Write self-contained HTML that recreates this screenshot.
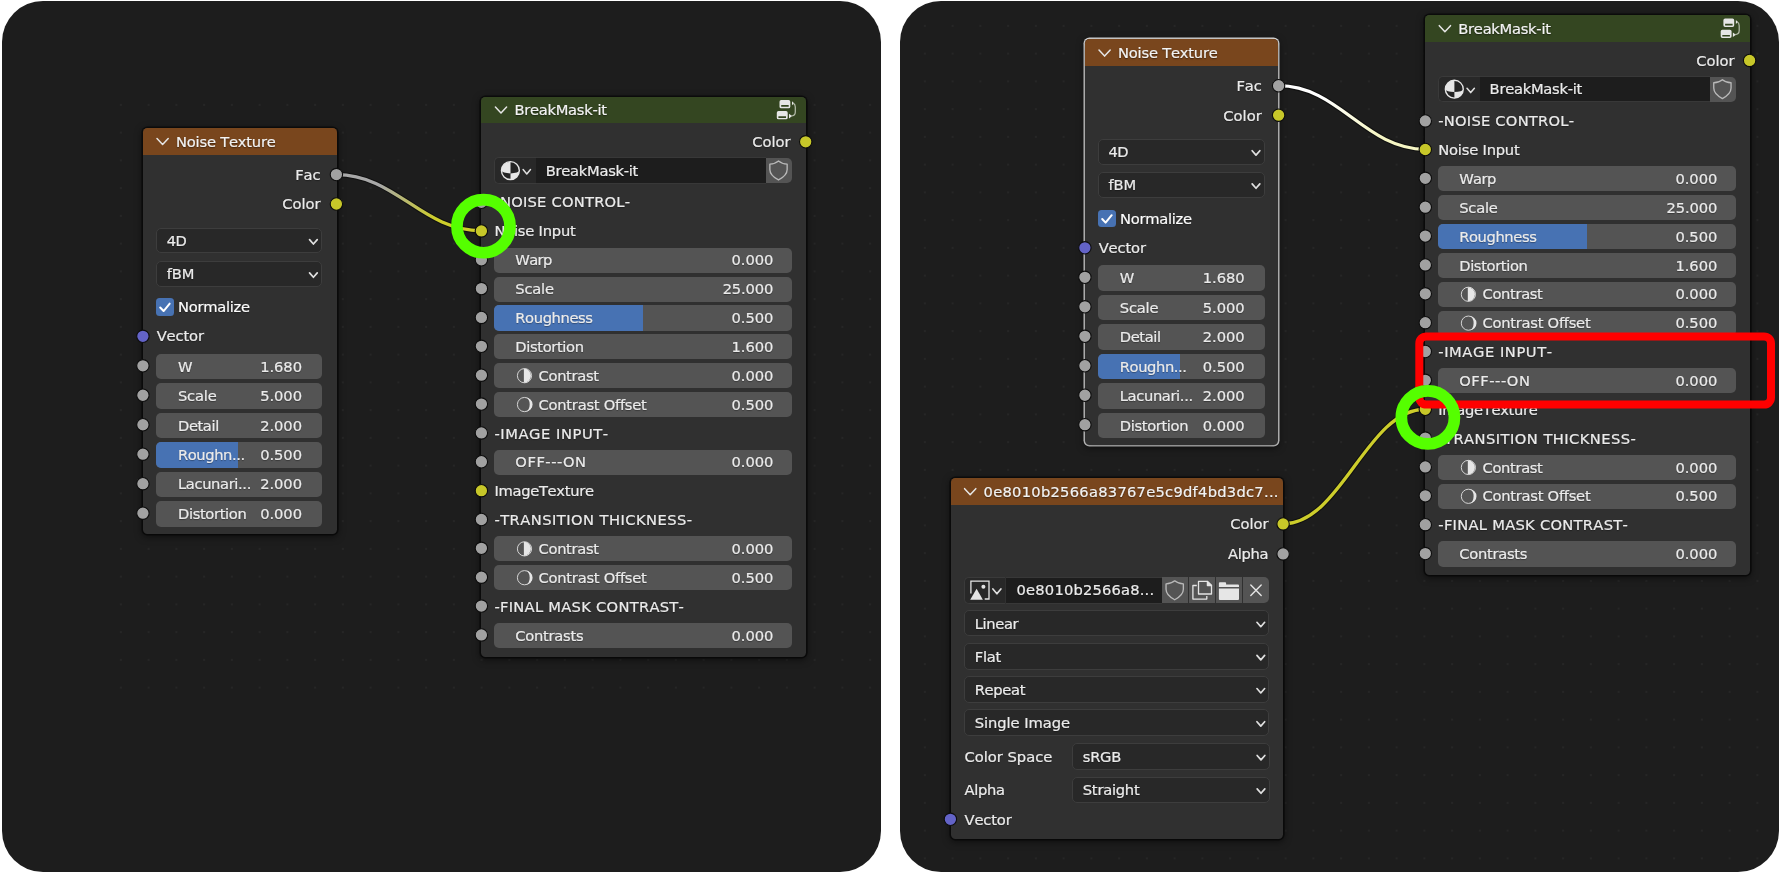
<!DOCTYPE html>
<html lang="en"><head><meta charset="utf-8"><title>BreakMask-it node setup</title>
<style>
html,body{margin:0;padding:0;background:#fff;}
body{width:1787px;height:874px;position:relative;overflow:hidden;font-family:"DejaVu Sans", "Liberation Sans", sans-serif;font-size:14.7px;color:#ebebeb;font-kerning:none;-webkit-text-stroke:0.22px #ebebeb;}
div{position:absolute;box-sizing:border-box;}
svg{position:absolute;left:0;top:0;}
#stage{left:0;top:0;width:1787px;height:874px;transform:translateZ(0);will-change:transform;}
.panel{background:#1d1d1d;border-radius:41px;overflow:hidden;}
.dots{background-image:radial-gradient(circle,#272727 0.6px,rgba(39,39,39,0) 1.4px);background-size:27.75px 27.75px;}
.node{background:#303030;border-radius:4.5px;box-shadow:0 2px 7px 1px rgba(0,0,0,.5),0 0 0 1.6px rgba(12,12,12,.85);}
.node.sel{box-shadow:0 2px 7px 1px rgba(0,0,0,.5),0 0 0 1.5px #ececec;}
.hd{border-radius:4.5px 4.5px 0 0;}
.t{white-space:nowrap;line-height:20px;height:20px;text-shadow:0 1px 1px rgba(0,0,0,.35);}
.ts{text-shadow:0 1px 1.5px rgba(0,0,0,.55);color:#f4f4f4;}
.fld{background:#545454;border-radius:5px;overflow:hidden;}
.fill{left:0;top:0;height:100%;background:#4772b3;}
.dd{background:#282828;border:1px solid #3d3d3d;border-radius:5px;}
.cb{background:#4772b3;border-radius:3.5px;}
.selico{background:#282828;border:1px solid #3a3a3a;border-right:none;border-radius:5px 0 0 5px;}
.name{background:#1d1d1d;border-top:1px solid #383838;border-bottom:1px solid #383838;}
.btn{background:#545454;}
</style></head><body>
<div id="stage">
<div class="panel" style="left:2px;top:1px;width:879px;height:870.5px"><div class="dots" style="left:105px;top:90px;width:780px;height:610px"></div></div>
<div class="panel" style="left:900px;top:1px;width:879px;height:870.5px"><div class="dots" style="left:11.4px;top:10.9px;width:880px;height:870px"></div></div>
<div class="node" style="left:143px;top:127.85px;width:193.8px;height:405.7px;"></div>
<div class="node" style="left:481.4px;top:96.5px;width:324.8px;height:560px;"></div>
<div class="node sel" style="left:1085px;top:39.4px;width:193px;height:405.7px;"></div>
<div class="node" style="left:1425.3px;top:15.1px;width:324.8px;height:560px;"></div>
<div class="node" style="left:950.6px;top:478.1px;width:332.5px;height:361px;"></div>
<svg width="1787" height="874" viewBox="0 0 1787 874"><defs></defs><linearGradient id="g1" gradientUnits="userSpaceOnUse" x1="336.4" y1="0" x2="481.4" y2="0"><stop offset="0.3" stop-color="#a8a8a8"/><stop offset="0.68" stop-color="#cdcd2b"/></linearGradient><path d="M336.4 174.6C395.85 174.6 421.95 230.8 481.4 230.8" fill="none" stroke="#101010" stroke-width="5.4" stroke-linecap="round"/><path d="M336.4 174.6C395.85 174.6 421.95 230.8 481.4 230.8" fill="none" stroke="url(#g1)" stroke-width="3.3" stroke-linecap="round"/><linearGradient id="g2" gradientUnits="userSpaceOnUse" x1="1278.6" y1="0" x2="1425.3" y2="0"><stop offset="0.3" stop-color="#ffffff"/><stop offset="0.68" stop-color="#f6f6c4"/></linearGradient><path d="M1278.6 85.7C1338.75 85.7 1365.15 149.3 1425.3 149.3" fill="none" stroke="#101010" stroke-width="5.4" stroke-linecap="round"/><path d="M1278.6 85.7C1338.75 85.7 1365.15 149.3 1425.3 149.3" fill="none" stroke="url(#g2)" stroke-width="3.3" stroke-linecap="round"/><linearGradient id="g3" gradientUnits="userSpaceOnUse" x1="1283.1" y1="0" x2="1425.3" y2="0"><stop offset="0.3" stop-color="#cdcd2b"/><stop offset="0.68" stop-color="#cdcd2b"/></linearGradient><path d="M1283.1 523.9C1341.4 523.9 1367 409.23 1425.3 409.23" fill="none" stroke="#101010" stroke-width="5.4" stroke-linecap="round"/><path d="M1283.1 523.9C1341.4 523.9 1367 409.23 1425.3 409.23" fill="none" stroke="url(#g3)" stroke-width="3.3" stroke-linecap="round"/></svg>
<div class="hd" style="left:143px;top:127.85px;width:193.8px;height:27px;background:#79461d;"></div>
<div class="t ts" style="top:131.65px;left:176px;letter-spacing:-0.2px;">Noise Texture</div>
<div class="t" style="top:164.75px;right:1466.5px;letter-spacing:-0.18px;margin-right:0.18px;">Fac</div>
<div class="t" style="top:194.15px;right:1466.5px;">Color</div>
<div class="dd" style="left:156px;top:227.85px;width:166px;height:25.6px;"></div>
<div class="t" style="top:230.65px;left:166.7px;letter-spacing:-0.48px;">4D</div>
<div class="dd" style="left:156px;top:261.05px;width:166px;height:25.6px;"></div>
<div class="t" style="top:263.85px;left:166.7px;letter-spacing:-0.07px;">fBM</div>
<div class="cb" style="left:156.2px;top:298.25px;width:17.8px;height:17.6px;"></div>
<div class="t" style="top:297.25px;left:178px;letter-spacing:-0.27px;color:#fff;">Normalize</div>
<div class="t" style="top:326.45px;left:156.7px;letter-spacing:-0.14px;">Vector</div>
<div class="fld" style="left:156px;top:353.7px;width:166px;height:25.6px;"></div>
<div class="t" style="top:356.6px;left:178px;letter-spacing:-0.6px;">W</div>
<div class="t" style="top:356.6px;right:1485px;letter-spacing:-0.05px;margin-right:0.05px;">1.680</div>
<div class="fld" style="left:156px;top:383.17px;width:166px;height:25.6px;"></div>
<div class="t" style="top:386.07px;left:178px;letter-spacing:-0.21px;">Scale</div>
<div class="t" style="top:386.07px;right:1485px;letter-spacing:-0.05px;margin-right:0.05px;">5.000</div>
<div class="fld" style="left:156px;top:412.64px;width:166px;height:25.6px;"></div>
<div class="t" style="top:415.54px;left:178px;letter-spacing:-0.41px;">Detail</div>
<div class="t" style="top:415.54px;right:1485px;letter-spacing:-0.05px;margin-right:0.05px;">2.000</div>
<div class="fld" style="left:156px;top:442.11px;width:166px;height:25.6px;"><div class="fill" style="width:82.17px"></div></div>
<div class="t" style="top:445.01px;left:178px;letter-spacing:-0.41px;">Roughn...</div>
<div class="t" style="top:445.01px;right:1485px;letter-spacing:-0.05px;margin-right:0.05px;">0.500</div>
<div class="fld" style="left:156px;top:471.58px;width:166px;height:25.6px;"></div>
<div class="t" style="top:474.48px;left:178px;letter-spacing:-0.37px;">Lacunari...</div>
<div class="t" style="top:474.48px;right:1485px;letter-spacing:-0.05px;margin-right:0.05px;">2.000</div>
<div class="fld" style="left:156px;top:501.05px;width:166px;height:25.6px;"></div>
<div class="t" style="top:503.95px;left:178px;letter-spacing:-0.36px;">Distortion</div>
<div class="t" style="top:503.95px;right:1485px;letter-spacing:-0.05px;margin-right:0.05px;">0.000</div>
<div class="hd" style="left:481.4px;top:96.5px;width:324.8px;height:26.7px;background:#344621;"></div>
<div class="t ts" style="top:100.15px;left:514.4px;letter-spacing:-0.27px;">BreakMask-it</div>
<div class="t" style="top:132px;right:996.4px;">Color</div>
<div class="selico" style="left:494.4px;top:157.3px;width:41.6px;height:26.4px;"></div>
<div class="name" style="left:536px;top:157.3px;width:229.8px;height:26.4px;"></div>
<div class="btn" style="left:765.8px;top:158px;width:26.3px;height:25px;border-radius:0 5px 5px 0;"></div>
<div class="t" style="top:160.6px;left:545.7px;letter-spacing:-0.27px;">BreakMask-it</div>
<div class="t" style="top:192.33px;left:494.4px;letter-spacing:0.23px;">-NOISE CONTROL-</div>
<div class="t" style="top:220.59px;left:494.4px;letter-spacing:-0.2px;">Noise Input</div>
<div class="fld" style="left:494.4px;top:247.65px;width:297.6px;height:25.2px;"></div>
<div class="t" style="top:250.35px;left:515.3px;letter-spacing:-0.6px;">Warp</div>
<div class="t" style="top:250.35px;right:1013.6px;letter-spacing:-0.05px;margin-right:0.05px;">0.000</div>
<div class="fld" style="left:494.4px;top:276.51px;width:297.6px;height:25.2px;"></div>
<div class="t" style="top:279.21px;left:515.3px;letter-spacing:-0.21px;">Scale</div>
<div class="t" style="top:279.21px;right:1013.6px;letter-spacing:-0.13px;margin-right:0.13px;">25.000</div>
<div class="fld" style="left:494.4px;top:305.37px;width:297.6px;height:25.2px;"><div class="fill" style="width:148.3px"></div></div>
<div class="t" style="top:308.07px;left:515.3px;letter-spacing:-0.39px;">Roughness</div>
<div class="t" style="top:308.07px;right:1013.6px;letter-spacing:-0.05px;margin-right:0.05px;">0.500</div>
<div class="fld" style="left:494.4px;top:334.23px;width:297.6px;height:25.2px;"></div>
<div class="t" style="top:336.93px;left:515.3px;letter-spacing:-0.36px;">Distortion</div>
<div class="t" style="top:336.93px;right:1013.6px;letter-spacing:-0.05px;margin-right:0.05px;">1.600</div>
<div class="fld" style="left:494.4px;top:363.09px;width:297.6px;height:25.2px;"></div>
<div class="t" style="top:365.79px;left:538.6px;letter-spacing:-0.34px;">Contrast</div>
<div class="t" style="top:365.79px;right:1013.6px;letter-spacing:-0.05px;margin-right:0.05px;">0.000</div>
<div class="fld" style="left:494.4px;top:391.95px;width:297.6px;height:25.2px;"></div>
<div class="t" style="top:394.65px;left:538.6px;letter-spacing:-0.26px;">Contrast Offset</div>
<div class="t" style="top:394.65px;right:1013.6px;letter-spacing:-0.05px;margin-right:0.05px;">0.500</div>
<div class="t" style="top:423.61px;left:494.4px;letter-spacing:0.57px;">-IMAGE INPUT-</div>
<div class="fld" style="left:494.4px;top:449.67px;width:297.6px;height:25.2px;"></div>
<div class="t" style="top:452.37px;left:515.3px;letter-spacing:0.54px;">OFF---ON</div>
<div class="t" style="top:452.37px;right:1013.6px;letter-spacing:-0.05px;margin-right:0.05px;">0.000</div>
<div class="t" style="top:481.33px;left:494.4px;letter-spacing:-0.3px;">ImageTexture</div>
<div class="t" style="top:510.19px;left:494.4px;letter-spacing:0.45px;">-TRANSITION THICKNESS-</div>
<div class="fld" style="left:494.4px;top:536.25px;width:297.6px;height:25.2px;"></div>
<div class="t" style="top:538.95px;left:538.6px;letter-spacing:-0.34px;">Contrast</div>
<div class="t" style="top:538.95px;right:1013.6px;letter-spacing:-0.05px;margin-right:0.05px;">0.000</div>
<div class="fld" style="left:494.4px;top:565.11px;width:297.6px;height:25.2px;"></div>
<div class="t" style="top:567.81px;left:538.6px;letter-spacing:-0.26px;">Contrast Offset</div>
<div class="t" style="top:567.81px;right:1013.6px;letter-spacing:-0.05px;margin-right:0.05px;">0.500</div>
<div class="t" style="top:596.77px;left:494.4px;letter-spacing:0.28px;">-FINAL MASK CONTRAST-</div>
<div class="fld" style="left:494.4px;top:622.83px;width:297.6px;height:25.2px;"></div>
<div class="t" style="top:625.53px;left:515.3px;letter-spacing:-0.27px;">Contrasts</div>
<div class="t" style="top:625.53px;right:1013.6px;letter-spacing:-0.05px;margin-right:0.05px;">0.000</div>
<div class="hd" style="left:1085px;top:39.4px;width:193px;height:27px;background:#79461d;"></div>
<div class="t ts" style="top:43.2px;left:1118px;letter-spacing:-0.2px;">Noise Texture</div>
<div class="t" style="top:76.3px;right:525.3px;letter-spacing:-0.18px;margin-right:0.18px;">Fac</div>
<div class="t" style="top:105.7px;right:525.3px;">Color</div>
<div class="dd" style="left:1097.8px;top:138.5px;width:166.8px;height:26.4px;"></div>
<div class="t" style="top:141.7px;left:1108.5px;letter-spacing:-0.48px;">4D</div>
<div class="dd" style="left:1097.8px;top:171.7px;width:166.8px;height:26.4px;"></div>
<div class="t" style="top:174.9px;left:1108.5px;letter-spacing:-0.07px;">fBM</div>
<div class="cb" style="left:1098.2px;top:209.8px;width:17.8px;height:17.6px;"></div>
<div class="t" style="top:208.8px;left:1120px;letter-spacing:-0.27px;color:#fff;">Normalize</div>
<div class="t" style="top:238px;left:1098.7px;letter-spacing:-0.14px;">Vector</div>
<div class="fld" style="left:1097.8px;top:265.25px;width:166.8px;height:25.6px;"></div>
<div class="t" style="top:268.15px;left:1119.8px;letter-spacing:-0.6px;">W</div>
<div class="t" style="top:268.15px;right:542.4px;letter-spacing:-0.05px;margin-right:0.05px;">1.680</div>
<div class="fld" style="left:1097.8px;top:294.72px;width:166.8px;height:25.6px;"></div>
<div class="t" style="top:297.62px;left:1119.8px;letter-spacing:-0.21px;">Scale</div>
<div class="t" style="top:297.62px;right:542.4px;letter-spacing:-0.05px;margin-right:0.05px;">5.000</div>
<div class="fld" style="left:1097.8px;top:324.19px;width:166.8px;height:25.6px;"></div>
<div class="t" style="top:327.09px;left:1119.8px;letter-spacing:-0.41px;">Detail</div>
<div class="t" style="top:327.09px;right:542.4px;letter-spacing:-0.05px;margin-right:0.05px;">2.000</div>
<div class="fld" style="left:1097.8px;top:353.66px;width:166.8px;height:25.6px;"><div class="fill" style="width:82.57px"></div></div>
<div class="t" style="top:356.56px;left:1119.8px;letter-spacing:-0.41px;">Roughn...</div>
<div class="t" style="top:356.56px;right:542.4px;letter-spacing:-0.05px;margin-right:0.05px;">0.500</div>
<div class="fld" style="left:1097.8px;top:383.13px;width:166.8px;height:25.6px;"></div>
<div class="t" style="top:386.03px;left:1119.8px;letter-spacing:-0.37px;">Lacunari...</div>
<div class="t" style="top:386.03px;right:542.4px;letter-spacing:-0.05px;margin-right:0.05px;">2.000</div>
<div class="fld" style="left:1097.8px;top:412.6px;width:166.8px;height:25.6px;"></div>
<div class="t" style="top:415.5px;left:1119.8px;letter-spacing:-0.36px;">Distortion</div>
<div class="t" style="top:415.5px;right:542.4px;letter-spacing:-0.05px;margin-right:0.05px;">0.000</div>
<div class="hd" style="left:1425.3px;top:15.1px;width:324.8px;height:26.7px;background:#344621;"></div>
<div class="t ts" style="top:18.75px;left:1458.3px;letter-spacing:-0.27px;">BreakMask-it</div>
<div class="t" style="top:50.6px;right:52.5px;">Color</div>
<div class="selico" style="left:1438.3px;top:75.9px;width:41.6px;height:26.4px;"></div>
<div class="name" style="left:1479.9px;top:75.9px;width:229.8px;height:26.4px;"></div>
<div class="btn" style="left:1709.7px;top:76.6px;width:26.3px;height:25px;border-radius:0 5px 5px 0;"></div>
<div class="t" style="top:79.2px;left:1489.6px;letter-spacing:-0.27px;">BreakMask-it</div>
<div class="t" style="top:110.93px;left:1438.3px;letter-spacing:0.23px;">-NOISE CONTROL-</div>
<div class="t" style="top:140.19px;left:1438.3px;letter-spacing:-0.2px;">Noise Input</div>
<div class="fld" style="left:1438.3px;top:166.25px;width:297.6px;height:25.2px;"></div>
<div class="t" style="top:168.95px;left:1459.2px;letter-spacing:-0.6px;">Warp</div>
<div class="t" style="top:168.95px;right:69.7px;letter-spacing:-0.05px;margin-right:0.05px;">0.000</div>
<div class="fld" style="left:1438.3px;top:195.11px;width:297.6px;height:25.2px;"></div>
<div class="t" style="top:197.81px;left:1459.2px;letter-spacing:-0.21px;">Scale</div>
<div class="t" style="top:197.81px;right:69.7px;letter-spacing:-0.13px;margin-right:0.13px;">25.000</div>
<div class="fld" style="left:1438.3px;top:223.97px;width:297.6px;height:25.2px;"><div class="fill" style="width:148.3px"></div></div>
<div class="t" style="top:226.67px;left:1459.2px;letter-spacing:-0.39px;">Roughness</div>
<div class="t" style="top:226.67px;right:69.7px;letter-spacing:-0.05px;margin-right:0.05px;">0.500</div>
<div class="fld" style="left:1438.3px;top:252.83px;width:297.6px;height:25.2px;"></div>
<div class="t" style="top:255.53px;left:1459.2px;letter-spacing:-0.36px;">Distortion</div>
<div class="t" style="top:255.53px;right:69.7px;letter-spacing:-0.05px;margin-right:0.05px;">1.600</div>
<div class="fld" style="left:1438.3px;top:281.69px;width:297.6px;height:25.2px;"></div>
<div class="t" style="top:284.39px;left:1482.5px;letter-spacing:-0.34px;">Contrast</div>
<div class="t" style="top:284.39px;right:69.7px;letter-spacing:-0.05px;margin-right:0.05px;">0.000</div>
<div class="fld" style="left:1438.3px;top:310.55px;width:297.6px;height:25.2px;"></div>
<div class="t" style="top:313.25px;left:1482.5px;letter-spacing:-0.26px;">Contrast Offset</div>
<div class="t" style="top:313.25px;right:69.7px;letter-spacing:-0.05px;margin-right:0.05px;">0.500</div>
<div class="t" style="top:342.21px;left:1438.3px;letter-spacing:0.57px;">-IMAGE INPUT-</div>
<div class="fld" style="left:1438.3px;top:368.27px;width:297.6px;height:25.2px;"></div>
<div class="t" style="top:370.97px;left:1459.2px;letter-spacing:0.54px;">OFF---ON</div>
<div class="t" style="top:370.97px;right:69.7px;letter-spacing:-0.05px;margin-right:0.05px;">0.000</div>
<div class="t" style="top:399.93px;left:1438.3px;letter-spacing:-0.3px;">ImageTexture</div>
<div class="t" style="top:428.79px;left:1438.3px;letter-spacing:0.45px;">-TRANSITION THICKNESS-</div>
<div class="fld" style="left:1438.3px;top:454.85px;width:297.6px;height:25.2px;"></div>
<div class="t" style="top:457.55px;left:1482.5px;letter-spacing:-0.34px;">Contrast</div>
<div class="t" style="top:457.55px;right:69.7px;letter-spacing:-0.05px;margin-right:0.05px;">0.000</div>
<div class="fld" style="left:1438.3px;top:483.71px;width:297.6px;height:25.2px;"></div>
<div class="t" style="top:486.41px;left:1482.5px;letter-spacing:-0.26px;">Contrast Offset</div>
<div class="t" style="top:486.41px;right:69.7px;letter-spacing:-0.05px;margin-right:0.05px;">0.500</div>
<div class="t" style="top:515.37px;left:1438.3px;letter-spacing:0.28px;">-FINAL MASK CONTRAST-</div>
<div class="fld" style="left:1438.3px;top:541.43px;width:297.6px;height:25.2px;"></div>
<div class="t" style="top:544.13px;left:1459.2px;letter-spacing:-0.27px;">Contrasts</div>
<div class="t" style="top:544.13px;right:69.7px;letter-spacing:-0.05px;margin-right:0.05px;">0.000</div>
<div class="hd" style="left:950.6px;top:478.1px;width:332.5px;height:26.7px;background:#79461d;"></div>
<div class="t ts" style="top:481.75px;left:983.6px;letter-spacing:0.26px;">0e8010b2566a83767e5c9df4bd3dc7...</div>
<div class="t" style="top:514.1px;right:518.5px;">Color</div>
<div class="t" style="top:544.1px;right:518.5px;letter-spacing:-0.29px;margin-right:0.29px;">Alpha</div>
<div class="selico" style="left:964px;top:576.5px;width:41.4px;height:27px;"></div>
<div class="name" style="left:1005.5px;top:576.5px;width:156.4px;height:27px;"></div>
<div class="btn" style="left:1161.9px;top:577.2px;width:26.2px;height:25.6px;"></div>
<div class="btn" style="left:1189.2px;top:577.2px;width:25.8px;height:25.6px;"></div>
<div class="btn" style="left:1216px;top:577.2px;width:25.9px;height:25.6px;"></div>
<div class="btn" style="left:1243px;top:577.2px;width:26.3px;height:25.6px;border-radius:0 5px 5px 0;"></div>
<div class="t" style="top:580.1px;left:1016.6px;letter-spacing:0.18px;">0e8010b2566a8...</div>
<div class="dd" style="left:964px;top:610.1px;width:305.4px;height:26.4px;"></div>
<div class="t" style="top:613.9px;left:974.7px;letter-spacing:-0.34px;">Linear</div>
<div class="dd" style="left:964px;top:643.23px;width:305.4px;height:26.4px;"></div>
<div class="t" style="top:647.03px;left:974.7px;letter-spacing:-0.22px;">Flat</div>
<div class="dd" style="left:964px;top:676.36px;width:305.4px;height:26.4px;"></div>
<div class="t" style="top:680.16px;left:974.7px;letter-spacing:-0.31px;">Repeat</div>
<div class="dd" style="left:964px;top:709.49px;width:305.4px;height:26.4px;"></div>
<div class="t" style="top:713.29px;left:974.7px;letter-spacing:-0.04px;">Single Image</div>
<div class="t" style="top:746.5px;left:964.5px;">Color Space</div>
<div class="dd" style="left:1072.1px;top:743.4px;width:197.5px;height:26.2px;"></div>
<div class="t" style="top:746.5px;left:1082.8px;letter-spacing:-0.28px;">sRGB</div>
<div class="t" style="top:780px;left:964.5px;letter-spacing:-0.29px;">Alpha</div>
<div class="dd" style="left:1072.1px;top:776.7px;width:197.5px;height:26.3px;"></div>
<div class="t" style="top:779.85px;left:1082.8px;letter-spacing:-0.25px;">Straight</div>
<div class="t" style="top:809.5px;left:964.5px;letter-spacing:-0.14px;">Vector</div>
<svg width="1787" height="874" viewBox="0 0 1787 874"><path d="M157 138.55L162.6 144.55L168.2 138.55" fill="none" stroke="#e6e6e6" stroke-width="1.5" stroke-linecap="round" stroke-linejoin="round"/><circle cx="336.4" cy="174.6" r="6.2" fill="#a1a1a1" stroke="#0d0d0d" stroke-width="1.1"/><circle cx="336.4" cy="204" r="6.2" fill="#c7c729" stroke="#0d0d0d" stroke-width="1.1"/><path d="M309.55 239.65L313.4 244.05L317.25 239.65" fill="none" stroke="#e0e0e0" stroke-width="1.7" stroke-linecap="round" stroke-linejoin="round"/><path d="M309.55 272.85L313.4 277.25L317.25 272.85" fill="none" stroke="#e0e0e0" stroke-width="1.7" stroke-linecap="round" stroke-linejoin="round"/><path d="M160.2 307.45l3.4 3.6l6.1 -7.4" fill="none" stroke="#fff" stroke-width="2" stroke-linecap="round" stroke-linejoin="round"/><circle cx="142.9" cy="336.3" r="6.2" fill="#6363c7" stroke="#0d0d0d" stroke-width="1.1"/><circle cx="142.9" cy="365.8" r="6.2" fill="#a1a1a1" stroke="#0d0d0d" stroke-width="1.1"/><circle cx="142.9" cy="395.27" r="6.2" fill="#a1a1a1" stroke="#0d0d0d" stroke-width="1.1"/><circle cx="142.9" cy="424.74" r="6.2" fill="#a1a1a1" stroke="#0d0d0d" stroke-width="1.1"/><circle cx="142.9" cy="454.21" r="6.2" fill="#a1a1a1" stroke="#0d0d0d" stroke-width="1.1"/><circle cx="142.9" cy="483.68" r="6.2" fill="#a1a1a1" stroke="#0d0d0d" stroke-width="1.1"/><circle cx="142.9" cy="513.15" r="6.2" fill="#a1a1a1" stroke="#0d0d0d" stroke-width="1.1"/><path d="M495.4 107.05L501 113.05L506.6 107.05" fill="none" stroke="#e6e6e6" stroke-width="1.5" stroke-linecap="round" stroke-linejoin="round"/><g transform="translate(481.4 96.5)" fill="#e6e6e6" stroke="none"><path fill-rule="evenodd" d="M299.8 3.45H307.2A1.7 1.7 0 0 1 308.9 5.15V10.15A1.7 1.7 0 0 1 307.2 11.85H299.8A1.7 1.7 0 0 1 298.1 10.15V5.15A1.7 1.7 0 0 1 299.8 3.45ZM299.8 8.6V10.3H307.3V8.6Z"/><path fill-rule="evenodd" d="M297.1 14.55H304.6A1.7 1.7 0 0 1 306.3 16.25V21.15A1.7 1.7 0 0 1 304.6 22.85H297.1A1.7 1.7 0 0 1 295.4 21.15V16.25A1.7 1.7 0 0 1 297.1 14.55ZM297 19.85V21.45H304.6V19.85Z"/><path d="M310.6 4.8V8.8L312.6 6.8Z"/><path d="M307.6 17.3V21.9L310.6 19.6Z"/><path d="M311.8 6.6C313.6 7.4 313.9 8.6 313.9 10.6V15.4C313.9 18.4 312.4 19.4 309.6 19.5" fill="none" stroke="#b4bcaa" stroke-width="1.25"/></g><circle cx="805.7" cy="141.85" r="6.2" fill="#c7c729" stroke="#0d0d0d" stroke-width="1.1"/><g transform="translate(510.4 170.6)"><circle r="8.95" fill="#242424" stroke="#e6e6e6" stroke-width="1.4"/><path d="M0.1 -8.95A8.95 8.95 0 0 0 -8.95 0A8.95 2.8 0 0 0 0.1 2.8Z" fill="#e6e6e6"/><path d="M0.1 2.8A8.95 2.8 0 0 0 8.95 0A8.95 8.95 0 0 1 0.1 8.95Z" fill="#e6e6e6"/></g><path d="M523.1 169.6L526.8 174L530.5 169.6" fill="none" stroke="#e0e0e0" stroke-width="1.5" stroke-linecap="round" stroke-linejoin="round"/><path transform="translate(778.5 161.05)" d="M0 0C2.5 2.2 5.5 3 8.65 3.1L8.65 8.4C8.65 13 4.5 16.5 0 18.9C-4.5 16.5 -8.65 13 -8.65 8.4L-8.65 3.1C-5.5 3 -2.5 2.2 0 0Z" fill="none" stroke="#b9b9b9" stroke-width="1.35" stroke-linejoin="round"/><circle cx="481.4" cy="202.33" r="6.2" fill="#a1a1a1" stroke="#0d0d0d" stroke-width="1.1"/><circle cx="481.4" cy="230.89" r="6.2" fill="#c7c729" stroke="#0d0d0d" stroke-width="1.1"/><circle cx="481.4" cy="259.75" r="6.2" fill="#a1a1a1" stroke="#0d0d0d" stroke-width="1.1"/><circle cx="481.4" cy="288.61" r="6.2" fill="#a1a1a1" stroke="#0d0d0d" stroke-width="1.1"/><circle cx="481.4" cy="317.47" r="6.2" fill="#a1a1a1" stroke="#0d0d0d" stroke-width="1.1"/><circle cx="481.4" cy="346.33" r="6.2" fill="#a1a1a1" stroke="#0d0d0d" stroke-width="1.1"/><circle cx="524.5" cy="375.69" r="7.1" fill="none" stroke="#e2e2e2" stroke-width="0.9"/><path d="M523.9 368.59A7.1 7.1 0 0 1 523.9 382.79Z" fill="#e6e6e6"/><circle cx="481.4" cy="375.19" r="6.2" fill="#a1a1a1" stroke="#0d0d0d" stroke-width="1.1"/><circle cx="524.5" cy="404.55" r="7.1" fill="none" stroke="#e2e2e2" stroke-width="0.9"/><path d="M525.5 397.45A7.1 7.1 0 0 1 525.5 411.65A4.2 7.1 0 0 0 525.5 397.45Z" fill="#e6e6e6"/><circle cx="481.4" cy="404.05" r="6.2" fill="#a1a1a1" stroke="#0d0d0d" stroke-width="1.1"/><circle cx="481.4" cy="432.91" r="6.2" fill="#a1a1a1" stroke="#0d0d0d" stroke-width="1.1"/><circle cx="481.4" cy="461.77" r="6.2" fill="#a1a1a1" stroke="#0d0d0d" stroke-width="1.1"/><circle cx="481.4" cy="490.63" r="6.2" fill="#c7c729" stroke="#0d0d0d" stroke-width="1.1"/><circle cx="481.4" cy="519.49" r="6.2" fill="#a1a1a1" stroke="#0d0d0d" stroke-width="1.1"/><circle cx="524.5" cy="548.85" r="7.1" fill="none" stroke="#e2e2e2" stroke-width="0.9"/><path d="M523.9 541.75A7.1 7.1 0 0 1 523.9 555.95Z" fill="#e6e6e6"/><circle cx="481.4" cy="548.35" r="6.2" fill="#a1a1a1" stroke="#0d0d0d" stroke-width="1.1"/><circle cx="524.5" cy="577.71" r="7.1" fill="none" stroke="#e2e2e2" stroke-width="0.9"/><path d="M525.5 570.61A7.1 7.1 0 0 1 525.5 584.81A4.2 7.1 0 0 0 525.5 570.61Z" fill="#e6e6e6"/><circle cx="481.4" cy="577.21" r="6.2" fill="#a1a1a1" stroke="#0d0d0d" stroke-width="1.1"/><circle cx="481.4" cy="606.07" r="6.2" fill="#a1a1a1" stroke="#0d0d0d" stroke-width="1.1"/><circle cx="481.4" cy="634.93" r="6.2" fill="#a1a1a1" stroke="#0d0d0d" stroke-width="1.1"/><path d="M1099 50.1L1104.6 56.1L1110.2 50.1" fill="none" stroke="#e6e6e6" stroke-width="1.5" stroke-linecap="round" stroke-linejoin="round"/><circle cx="1278.6" cy="85.75" r="6.2" fill="#a1a1a1" stroke="#0d0d0d" stroke-width="1.1"/><circle cx="1278.6" cy="115.15" r="6.2" fill="#c7c729" stroke="#0d0d0d" stroke-width="1.1"/><path d="M1252.15 150.7L1256 155.1L1259.85 150.7" fill="none" stroke="#e0e0e0" stroke-width="1.7" stroke-linecap="round" stroke-linejoin="round"/><path d="M1252.15 183.9L1256 188.3L1259.85 183.9" fill="none" stroke="#e0e0e0" stroke-width="1.7" stroke-linecap="round" stroke-linejoin="round"/><path d="M1102.2 219l3.4 3.6l6.1 -7.4" fill="none" stroke="#fff" stroke-width="2" stroke-linecap="round" stroke-linejoin="round"/><circle cx="1084.9" cy="247.85" r="6.2" fill="#6363c7" stroke="#0d0d0d" stroke-width="1.1"/><circle cx="1084.9" cy="277.35" r="6.2" fill="#a1a1a1" stroke="#0d0d0d" stroke-width="1.1"/><circle cx="1084.9" cy="306.82" r="6.2" fill="#a1a1a1" stroke="#0d0d0d" stroke-width="1.1"/><circle cx="1084.9" cy="336.29" r="6.2" fill="#a1a1a1" stroke="#0d0d0d" stroke-width="1.1"/><circle cx="1084.9" cy="365.76" r="6.2" fill="#a1a1a1" stroke="#0d0d0d" stroke-width="1.1"/><circle cx="1084.9" cy="395.23" r="6.2" fill="#a1a1a1" stroke="#0d0d0d" stroke-width="1.1"/><circle cx="1084.9" cy="424.7" r="6.2" fill="#a1a1a1" stroke="#0d0d0d" stroke-width="1.1"/><path d="M1439.3 25.65L1444.9 31.65L1450.5 25.65" fill="none" stroke="#e6e6e6" stroke-width="1.5" stroke-linecap="round" stroke-linejoin="round"/><g transform="translate(1425.3 15.1)" fill="#e6e6e6" stroke="none"><path fill-rule="evenodd" d="M299.8 3.45H307.2A1.7 1.7 0 0 1 308.9 5.15V10.15A1.7 1.7 0 0 1 307.2 11.85H299.8A1.7 1.7 0 0 1 298.1 10.15V5.15A1.7 1.7 0 0 1 299.8 3.45ZM299.8 8.6V10.3H307.3V8.6Z"/><path fill-rule="evenodd" d="M297.1 14.55H304.6A1.7 1.7 0 0 1 306.3 16.25V21.15A1.7 1.7 0 0 1 304.6 22.85H297.1A1.7 1.7 0 0 1 295.4 21.15V16.25A1.7 1.7 0 0 1 297.1 14.55ZM297 19.85V21.45H304.6V19.85Z"/><path d="M310.6 4.8V8.8L312.6 6.8Z"/><path d="M307.6 17.3V21.9L310.6 19.6Z"/><path d="M311.8 6.6C313.6 7.4 313.9 8.6 313.9 10.6V15.4C313.9 18.4 312.4 19.4 309.6 19.5" fill="none" stroke="#b4bcaa" stroke-width="1.25"/></g><circle cx="1749.6" cy="60.45" r="6.2" fill="#c7c729" stroke="#0d0d0d" stroke-width="1.1"/><g transform="translate(1454.3 89.2)"><circle r="8.95" fill="#242424" stroke="#e6e6e6" stroke-width="1.4"/><path d="M0.1 -8.95A8.95 8.95 0 0 0 -8.95 0A8.95 2.8 0 0 0 0.1 2.8Z" fill="#e6e6e6"/><path d="M0.1 2.8A8.95 2.8 0 0 0 8.95 0A8.95 8.95 0 0 1 0.1 8.95Z" fill="#e6e6e6"/></g><path d="M1467 88.2L1470.7 92.6L1474.4 88.2" fill="none" stroke="#e0e0e0" stroke-width="1.5" stroke-linecap="round" stroke-linejoin="round"/><path transform="translate(1722.4 79.65)" d="M0 0C2.5 2.2 5.5 3 8.65 3.1L8.65 8.4C8.65 13 4.5 16.5 0 18.9C-4.5 16.5 -8.65 13 -8.65 8.4L-8.65 3.1C-5.5 3 -2.5 2.2 0 0Z" fill="none" stroke="#b9b9b9" stroke-width="1.35" stroke-linejoin="round"/><circle cx="1425.3" cy="120.93" r="6.2" fill="#a1a1a1" stroke="#0d0d0d" stroke-width="1.1"/><circle cx="1425.3" cy="149.49" r="6.2" fill="#c7c729" stroke="#0d0d0d" stroke-width="1.1"/><circle cx="1425.3" cy="178.35" r="6.2" fill="#a1a1a1" stroke="#0d0d0d" stroke-width="1.1"/><circle cx="1425.3" cy="207.21" r="6.2" fill="#a1a1a1" stroke="#0d0d0d" stroke-width="1.1"/><circle cx="1425.3" cy="236.07" r="6.2" fill="#a1a1a1" stroke="#0d0d0d" stroke-width="1.1"/><circle cx="1425.3" cy="264.93" r="6.2" fill="#a1a1a1" stroke="#0d0d0d" stroke-width="1.1"/><circle cx="1468.4" cy="294.29" r="7.1" fill="none" stroke="#e2e2e2" stroke-width="0.9"/><path d="M1467.8 287.19A7.1 7.1 0 0 1 1467.8 301.39Z" fill="#e6e6e6"/><circle cx="1425.3" cy="293.79" r="6.2" fill="#a1a1a1" stroke="#0d0d0d" stroke-width="1.1"/><circle cx="1468.4" cy="323.15" r="7.1" fill="none" stroke="#e2e2e2" stroke-width="0.9"/><path d="M1469.4 316.05A7.1 7.1 0 0 1 1469.4 330.25A4.2 7.1 0 0 0 1469.4 316.05Z" fill="#e6e6e6"/><circle cx="1425.3" cy="322.65" r="6.2" fill="#a1a1a1" stroke="#0d0d0d" stroke-width="1.1"/><circle cx="1425.3" cy="351.51" r="6.2" fill="#a1a1a1" stroke="#0d0d0d" stroke-width="1.1"/><circle cx="1425.3" cy="380.37" r="6.2" fill="#a1a1a1" stroke="#0d0d0d" stroke-width="1.1"/><circle cx="1425.3" cy="409.23" r="6.2" fill="#c7c729" stroke="#0d0d0d" stroke-width="1.1"/><circle cx="1425.3" cy="438.09" r="6.2" fill="#a1a1a1" stroke="#0d0d0d" stroke-width="1.1"/><circle cx="1468.4" cy="467.45" r="7.1" fill="none" stroke="#e2e2e2" stroke-width="0.9"/><path d="M1467.8 460.35A7.1 7.1 0 0 1 1467.8 474.55Z" fill="#e6e6e6"/><circle cx="1425.3" cy="466.95" r="6.2" fill="#a1a1a1" stroke="#0d0d0d" stroke-width="1.1"/><circle cx="1468.4" cy="496.31" r="7.1" fill="none" stroke="#e2e2e2" stroke-width="0.9"/><path d="M1469.4 489.21A7.1 7.1 0 0 1 1469.4 503.41A4.2 7.1 0 0 0 1469.4 489.21Z" fill="#e6e6e6"/><circle cx="1425.3" cy="495.81" r="6.2" fill="#a1a1a1" stroke="#0d0d0d" stroke-width="1.1"/><circle cx="1425.3" cy="524.67" r="6.2" fill="#a1a1a1" stroke="#0d0d0d" stroke-width="1.1"/><circle cx="1425.3" cy="553.53" r="6.2" fill="#a1a1a1" stroke="#0d0d0d" stroke-width="1.1"/><path d="M964.6 488.65L970.2 494.65L975.8 488.65" fill="none" stroke="#e6e6e6" stroke-width="1.5" stroke-linecap="round" stroke-linejoin="round"/><circle cx="1283.1" cy="523.9" r="6.2" fill="#c7c729" stroke="#0d0d0d" stroke-width="1.1"/><circle cx="1283.1" cy="553.9" r="6.2" fill="#a1a1a1" stroke="#0d0d0d" stroke-width="1.1"/><g transform="translate(970.2 580.4)"><path d="M0.7 13V0.7H18.8V18.6H14.5" fill="none" stroke="#e4e4e4" stroke-width="1.3"/><path d="M0 19.3L6.4 8.4L12.7 19.3Z" fill="#e4e4e4"/><circle cx="13.2" cy="6.4" r="2" fill="#e4e4e4"/></g><path d="M992.9 589L996.9 593.8L1000.9 589" fill="none" stroke="#e0e0e0" stroke-width="1.7" stroke-linecap="round" stroke-linejoin="round"/><path transform="translate(1174.7 580.85)" d="M0 0C2.5 2.2 5.5 3 8.65 3.1L8.65 8.4C8.65 13 4.5 16.5 0 18.9C-4.5 16.5 -8.65 13 -8.65 8.4L-8.65 3.1C-5.5 3 -2.5 2.2 0 0Z" fill="none" stroke="#b9b9b9" stroke-width="1.35" stroke-linejoin="round"/><g transform="translate(1192.2 580.7)" fill="none" stroke="#e4e4e4" stroke-width="1.3" stroke-linejoin="round"><path d="M4.6 4.8H0.7V18.4H14.6V15.2"/><path d="M6.3 0.7H15.2L19.3 4.8V13.3H6.3Z"/><path d="M15.2 0.7V4.8H19.3Z" fill="#e4e4e4"/></g><g transform="translate(1218.9 582.1)" fill="#e6e6e6"><path d="M0 1.2a1 1 0 0 1 1 -1h5.2a1 1 0 0 1 1 1v1.2h11.9a1 1 0 0 1 1 1v1.5H0Z"/><path d="M0 6.4H20.1V16.8a1 1 0 0 1 -1 1H1a1 1 0 0 1 -1 -1Z"/></g><path d="M1250.8 585.1L1261.2 595.5M1261.2 585.1L1250.8 595.5" stroke="#e6e6e6" stroke-width="1.4" stroke-linecap="round" fill="none"/><path d="M1256.95 622.3L1260.8 626.7L1264.65 622.3" fill="none" stroke="#e0e0e0" stroke-width="1.7" stroke-linecap="round" stroke-linejoin="round"/><path d="M1256.95 655.43L1260.8 659.83L1264.65 655.43" fill="none" stroke="#e0e0e0" stroke-width="1.7" stroke-linecap="round" stroke-linejoin="round"/><path d="M1256.95 688.56L1260.8 692.96L1264.65 688.56" fill="none" stroke="#e0e0e0" stroke-width="1.7" stroke-linecap="round" stroke-linejoin="round"/><path d="M1256.95 721.69L1260.8 726.09L1264.65 721.69" fill="none" stroke="#e0e0e0" stroke-width="1.7" stroke-linecap="round" stroke-linejoin="round"/><path d="M1257.15 755.5L1261 759.9L1264.85 755.5" fill="none" stroke="#e0e0e0" stroke-width="1.7" stroke-linecap="round" stroke-linejoin="round"/><path d="M1257.15 788.85L1261 793.25L1264.85 788.85" fill="none" stroke="#e0e0e0" stroke-width="1.7" stroke-linecap="round" stroke-linejoin="round"/><circle cx="950.4" cy="819.3" r="6.2" fill="#6363c7" stroke="#0d0d0d" stroke-width="1.1"/></svg>
<svg width="1787" height="874" viewBox="0 0 1787 874"><rect x="1419.3" y="336.4" width="351.7" height="68.2" rx="7" ry="7" fill="none" stroke="#ff0000" stroke-width="8"/><circle cx="483.5" cy="226.2" r="26.55" fill="none" stroke="#55ff00" stroke-width="11.7"/><circle cx="1427.9" cy="417.4" r="26.55" fill="none" stroke="#55ff00" stroke-width="11.7"/></svg>
</div>
</body></html>
